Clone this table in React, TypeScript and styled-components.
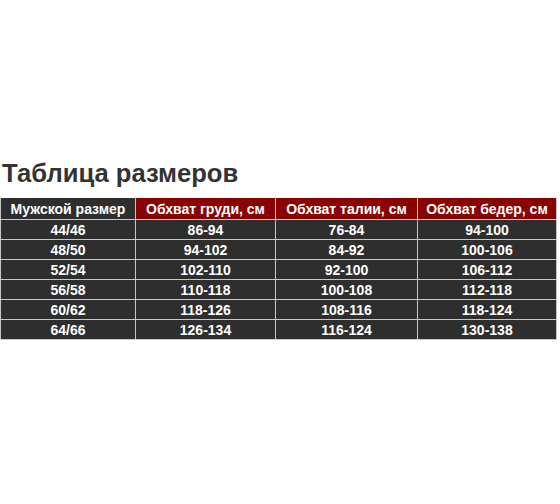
import React from 'react';
import styled, { createGlobalStyle } from 'styled-components';

const GlobalStyle = createGlobalStyle`
  html, body {
    margin: 0;
    padding: 0;
    background: #ffffff;
  }
  body {
    font-family: "Liberation Sans", Arial, sans-serif;
  }
`;

const Page = styled.div`
  width: 560px;
  height: 504px;
  padding-top: 157px;
  box-sizing: border-box;
`;

const Title = styled.h1`
  margin: 0 0 9px 2px;
  font-size: 25.6px;
  line-height: 32px;
  font-weight: 700;
  color: #333333;
`;

const Table = styled.table`
  width: 556px;
  border-collapse: collapse;
  table-layout: fixed;
  background: #2e2e2e;
`;

const HeadCell = styled.th<{ $accent?: boolean }>`
  height: 21px;
  padding: 0;
  background: ${p => (p.$accent ? '#8a0303' : '#2e2e2e')};
  color: #ffffff;
  font-size: 14px;
  font-weight: 700;
  text-align: center;
  border: 1px solid #c8c8c8;
  border-top: none;
`;

const Cell = styled.td`
  height: 19px;
  padding: 0;
  color: #ffffff;
  font-size: 14px;
  font-weight: 700;
  text-align: center;
  border: 1px solid #c8c8c8;
`;

const columns = [
  { title: 'Мужской размер', width: 135, accent: false },
  { title: 'Обхват груди, см', width: 140, accent: true },
  { title: 'Обхват талии, см', width: 142, accent: true },
  { title: 'Обхват бедер, см', width: 139, accent: true },
];

const rows = [
  ['44/46', '86-94', '76-84', '94-100'],
  ['48/50', '94-102', '84-92', '100-106'],
  ['52/54', '102-110', '92-100', '106-112'],
  ['56/58', '110-118', '100-108', '112-118'],
  ['60/62', '118-126', '108-116', '118-124'],
  ['64/66', '126-134', '116-124', '130-138'],
];

const App: React.FC = () => (
  <>
    <GlobalStyle />
    <Page>
      <Title>Таблица размеров</Title>
      <Table>
        <colgroup>
          {columns.map(c => (
            <col key={c.title} style={{ width: c.width }} />
          ))}
        </colgroup>
        <thead>
          <tr>
            {columns.map(c => (
              <HeadCell key={c.title} $accent={c.accent}>
                {c.title}
              </HeadCell>
            ))}
          </tr>
        </thead>
        <tbody>
          {rows.map(r => (
            <tr key={r[0]}>
              {r.map((v, i) => (
                <Cell key={i}>{v}</Cell>
              ))}
            </tr>
          ))}
        </tbody>
      </Table>
    </Page>
  </>
);

export default App;
